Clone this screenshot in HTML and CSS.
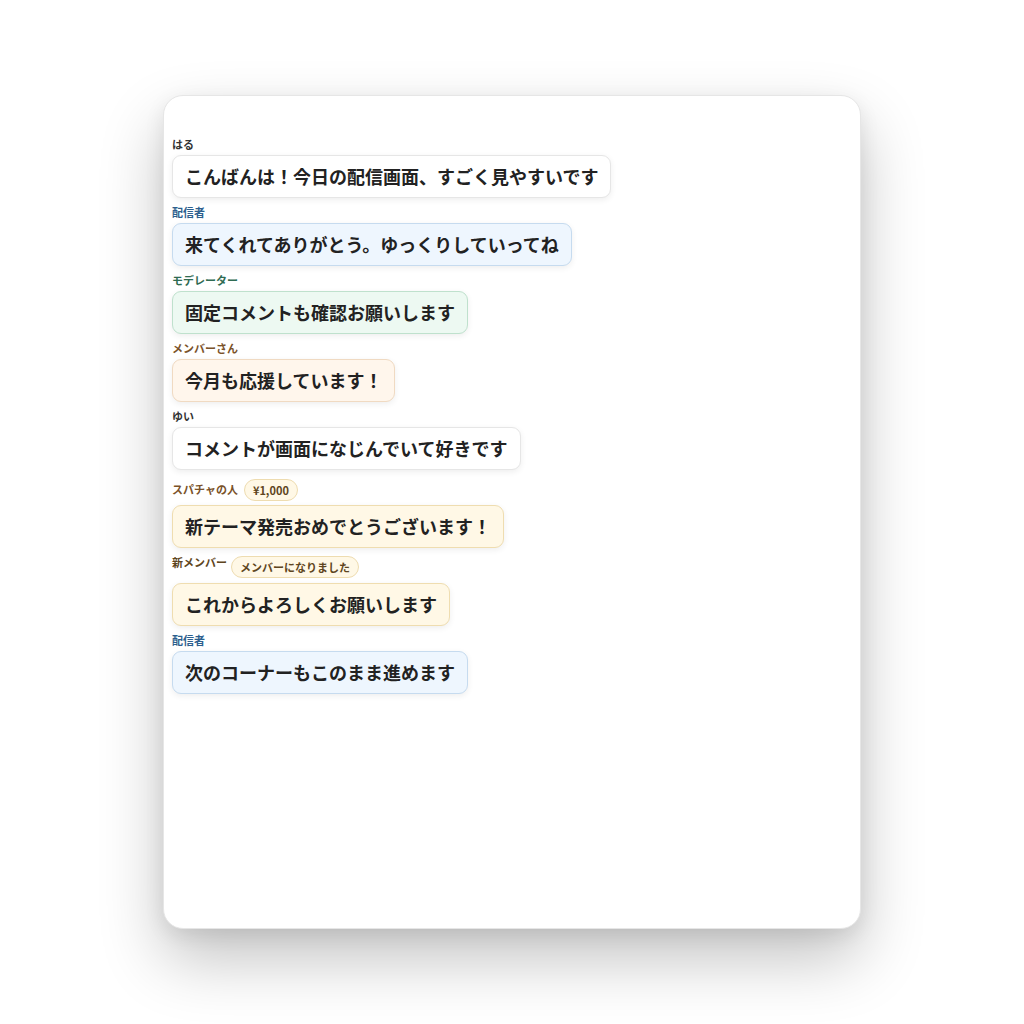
FILE: index.html
```html
<!DOCTYPE html>
<html lang="ja">
<head>
<meta charset="utf-8">
<link rel="stylesheet" href="styles.css">
</head>
<body>
<div class="card">
  <div class="chat">
    <div class="item">
      <div class="name">はる</div>
      <div class="bubble">こんばんは！今日の配信画面、すごく見やすいです</div>
    </div>
    <div class="item item-host">
      <div class="name">配信者</div>
      <div class="bubble">来てくれてありがとう。ゆっくりしていってね</div>
    </div>
    <div class="item item-mod">
      <div class="name">モデレーター</div>
      <div class="bubble">固定コメントも確認お願いします</div>
    </div>
    <div class="item item-member">
      <div class="name">メンバーさん</div>
      <div class="bubble">今月も応援しています！</div>
    </div>
    <div class="item">
      <div class="name">ゆい</div>
      <div class="bubble">コメントが画面になじんでいて好きです</div>
    </div>
    <div class="item item-super">
      <div class="head">
        <div class="name">スパチャの人</div>
        <div class="badge">¥1,000</div>
      </div>
      <div class="bubble">新テーマ発売おめでとうございます！</div>
    </div>
    <div class="item item-super item-newmember">
      <div class="head head-top">
        <div class="name">新メンバー</div>
        <div class="badge">メンバーになりました</div>
      </div>
      <div class="bubble">これからよろしくお願いします</div>
    </div>
    <div class="item item-host">
      <div class="name">配信者</div>
      <div class="bubble">次のコーナーもこのまま進めます</div>
    </div>
  </div>
</div>
</body>
</html>
```

FILE: styles.css
```css
html, body {
  margin: 0;
  padding: 0;
  background: #ffffff;
}
body {
  height: 1024px;
  display: flex;
  align-items: center;
  justify-content: center;
  font-family: "Noto Sans CJK JP", "Noto Sans", sans-serif;
}
.card {
  box-sizing: border-box;
  width: 698px;
  height: 834px;
  background: #ffffff;
  border: 1px solid #e6e6e6;
  border-radius: 20px;
  box-shadow: 0 30px 64px rgba(0, 0, 0, 0.24), 0 6px 20px rgba(0, 0, 0, 0.08);
  padding: 41px 8px 0 8px;
}
.chat {
  display: flex;
  flex-direction: column;
  align-items: flex-start;
  gap: 7px;
}
.item {
  display: flex;
  flex-direction: column;
  align-items: flex-start;
  gap: 4px;
}
.name {
  font-size: 11px;
  line-height: 14px;
  font-weight: 700;
  color: #333333;
  white-space: nowrap;
}
.bubble {
  font-size: 18px;
  line-height: 27px;
  font-weight: 700;
  color: #222222;
  background: #ffffff;
  border: 1px solid #e6e6e6;
  border-radius: 9px;
  padding: 7px 12px;
  box-shadow: 0 2px 6px rgba(0, 0, 0, 0.07);
  white-space: nowrap;
}
.head {
  display: flex;
  align-items: center;
  gap: 6px;
  height: 24px;
}
.head-top {
  align-items: flex-start;
  gap: 4px;
}
.badge {
  margin-top: 1px;
  font-size: 11px;
  line-height: 20px;
  font-weight: 700;
  color: #5e4520;
  background: #fff8e6;
  border: 1px solid #eedcb0;
  border-radius: 999px;
  padding: 0 8px;
  white-space: nowrap;
}
.item-host .name { color: #2d5f8e; }
.item-host .bubble { background: #eef6fe; border-color: #c6dbef; }
.item-mod .name { color: #2f6b52; }
.item-mod .bubble { background: #edf9f2; border-color: #bfe1cd; }
.item-member .name { color: #7a5229; }
.item-member .bubble { background: #fff6ec; border-color: #f0dac2; }
.item-super .name { color: #7a5229; }
.item-super .bubble { background: #fff8e6; border-color: #efddb0; }
.item-newmember .name { color: #5e4520; }
```
